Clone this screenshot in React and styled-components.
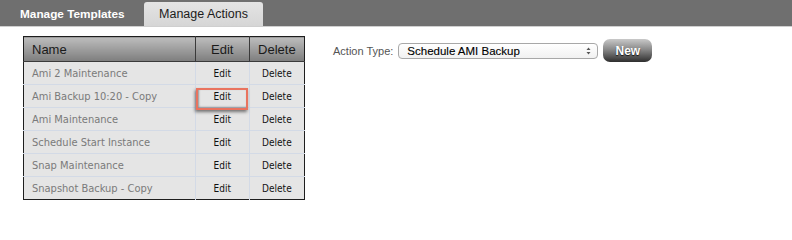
import React from "react";
import styled, { createGlobalStyle } from "styled-components";

const Global = createGlobalStyle`
  html, body { margin: 0; padding: 0; background: #ffffff; }
  body { font-family: "Liberation Sans", Arial, sans-serif; }
`;

const Page = styled.div`
  width: 792px;
  height: 206px;
  background: #fff;
  overflow: hidden;
`;

const TopBar = styled.div`
  height: 26px;
  background: #6f6f6f;
  border-bottom: 1px solid #cfcfcf;
  display: flex;
  align-items: flex-end;
  padding-left: 20px;
`;

const Tab = styled.div`
  height: ${(p) => (p.$active ? "24px" : "26px")};
  box-sizing: border-box;
  display: flex;
  align-items: center;
  font-size: ${(p) => (p.$active ? "12.5px" : "11.8px")};
  font-weight: ${(p) => (p.$active ? 400 : 700)};
  color: ${(p) => (p.$active ? "#1c1c1c" : "#ffffff")};
  background: ${(p) => (p.$active ? "linear-gradient(#e4e4e4, #d6d6d6)" : "transparent")};
  border-radius: 3px 3px 0 0;
  width: ${(p) => p.$w}px;
  justify-content: ${(p) => (p.$active ? "center" : "flex-start")};
  padding-top: ${(p) => (p.$active ? "0" : "2px")};
`;

const Content = styled.div`
  display: flex;
  align-items: flex-start;
  padding: 9px 0 0 23px;
`;

const Table = styled.table`
  border-collapse: collapse;
  border: 1px solid #1e1e1e;
  width: 282px;
  table-layout: fixed;
`;

const HeadCell = styled.th`
  height: 25px;
  padding: 0;
  padding-left: ${(p) => (p.$left ? "8px" : "0")};
  text-align: ${(p) => (p.$left ? "left" : "center")};
  font-weight: 400;
  font-size: 13px;
  color: #1a1a1a;
  background: linear-gradient(#bdbdbd, #7d7d7d);
  border-left: 1px solid #3a3a3a;
  border-bottom: 1px solid #3a3a3a;
  box-sizing: border-box;
  &:first-child { border-left: none; }
`;

const Cell = styled.td`
  height: 23px;
  box-sizing: border-box;
  position: relative;
  background: #e5e5e5;
  border-top: 1px solid #d3dae6;
  border-left: 1px solid #d3dae6;
  &:first-child { border-left: none; }
  padding: 0;
  padding-left: ${(p) => (p.$name ? "8px" : "0")};
  text-align: ${(p) => (p.$name ? "left" : "center")};
  font-family: "DejaVu Sans Condensed", "DejaVu Sans", sans-serif;
  font-size: ${(p) => (p.$name ? "11px" : "10px")};
  color: ${(p) => (p.$name ? "#7a7a7a" : "#111")};
  white-space: nowrap;
`;

const Highlight = styled.span`
  position: absolute;
  z-index: 2;
  left: 0;
  top: 3px;
  width: 52px;
  height: 22px;
  box-sizing: border-box;
  border: 2px solid #e9735f;
  box-shadow: -1px 2px 3px rgba(0, 0, 0, 0.5), inset 1px -1px 2px rgba(0, 0, 0, 0.35);
  pointer-events: none;
`;

const Side = styled.div`
  display: flex;
  align-items: center;
  margin-left: 28px;
  padding-top: 3px;
`;

const Label = styled.span`
  font-size: 11px;
  color: #555;
  margin-right: 5px;
`;

const SelectBox = styled.div`
  width: 200px;
  height: 16px;
  box-sizing: border-box;
  border: 1px solid #a8a8a8;
  border-radius: 4px;
  background: linear-gradient(#ffffff, #f1f1f1);
  display: flex;
  align-items: center;
  justify-content: space-between;
  padding: 0 6px 0 8px;
  font-size: 11.5px;
  color: #000;
  -webkit-text-stroke: 0.12px #000;
`;

const Arrows = styled.svg`
  width: 5px;
  height: 8px;
`;

const NewButton = styled.button`
  margin-left: 5px;
  width: 49px;
  height: 23px;
  border: none;
  border-radius: 7px;
  background: linear-gradient(#c9c9c9 0%, #8a8a8a 45%, #2e2e2e 100%);
  color: #fff;
  font-family: "Liberation Sans", Arial, sans-serif;
  font-weight: 700;
  font-size: 12px;
  text-shadow: 0 1px 1px rgba(0, 0, 0, 0.8);
  padding: 0;
`;

const rows = [
  "Ami 2 Maintenance",
  "Ami Backup 10:20 - Copy",
  "Ami Maintenance",
  "Schedule Start Instance",
  "Snap Maintenance",
  "Snapshot Backup - Copy",
];

export default function App() {
  return (
    <Page>
      <Global />
      <TopBar>
        <Tab $w={124}>Manage Templates</Tab>
        <Tab $active $w={119}>Manage Actions</Tab>
      </TopBar>
      <Content>
        <Table>
          <colgroup>
            <col style={{ width: 171 }} />
            <col style={{ width: 54 }} />
            <col style={{ width: 55 }} />
          </colgroup>
          <thead>
            <tr>
              <HeadCell $left>Name</HeadCell>
              <HeadCell>Edit</HeadCell>
              <HeadCell>Delete</HeadCell>
            </tr>
          </thead>
          <tbody>
            {rows.map((name, i) => (
              <tr key={name}>
                <Cell $name>{name}</Cell>
                <Cell>
                  Edit
                  {i === 1 && <Highlight />}
                </Cell>
                <Cell>Delete</Cell>
              </tr>
            ))}
          </tbody>
        </Table>
        <Side>
          <Label>Action Type:</Label>
          <SelectBox>
            <span>Schedule AMI Backup</span>
            <Arrows viewBox="0 0 5 8">
              <path d="M0.5 3 L2.5 0.5 L4.5 3 Z" fill="#555" />
              <path d="M0.5 5 L2.5 7.5 L4.5 5 Z" fill="#555" />
            </Arrows>
          </SelectBox>
          <NewButton>New</NewButton>
        </Side>
      </Content>
    </Page>
  );
}
